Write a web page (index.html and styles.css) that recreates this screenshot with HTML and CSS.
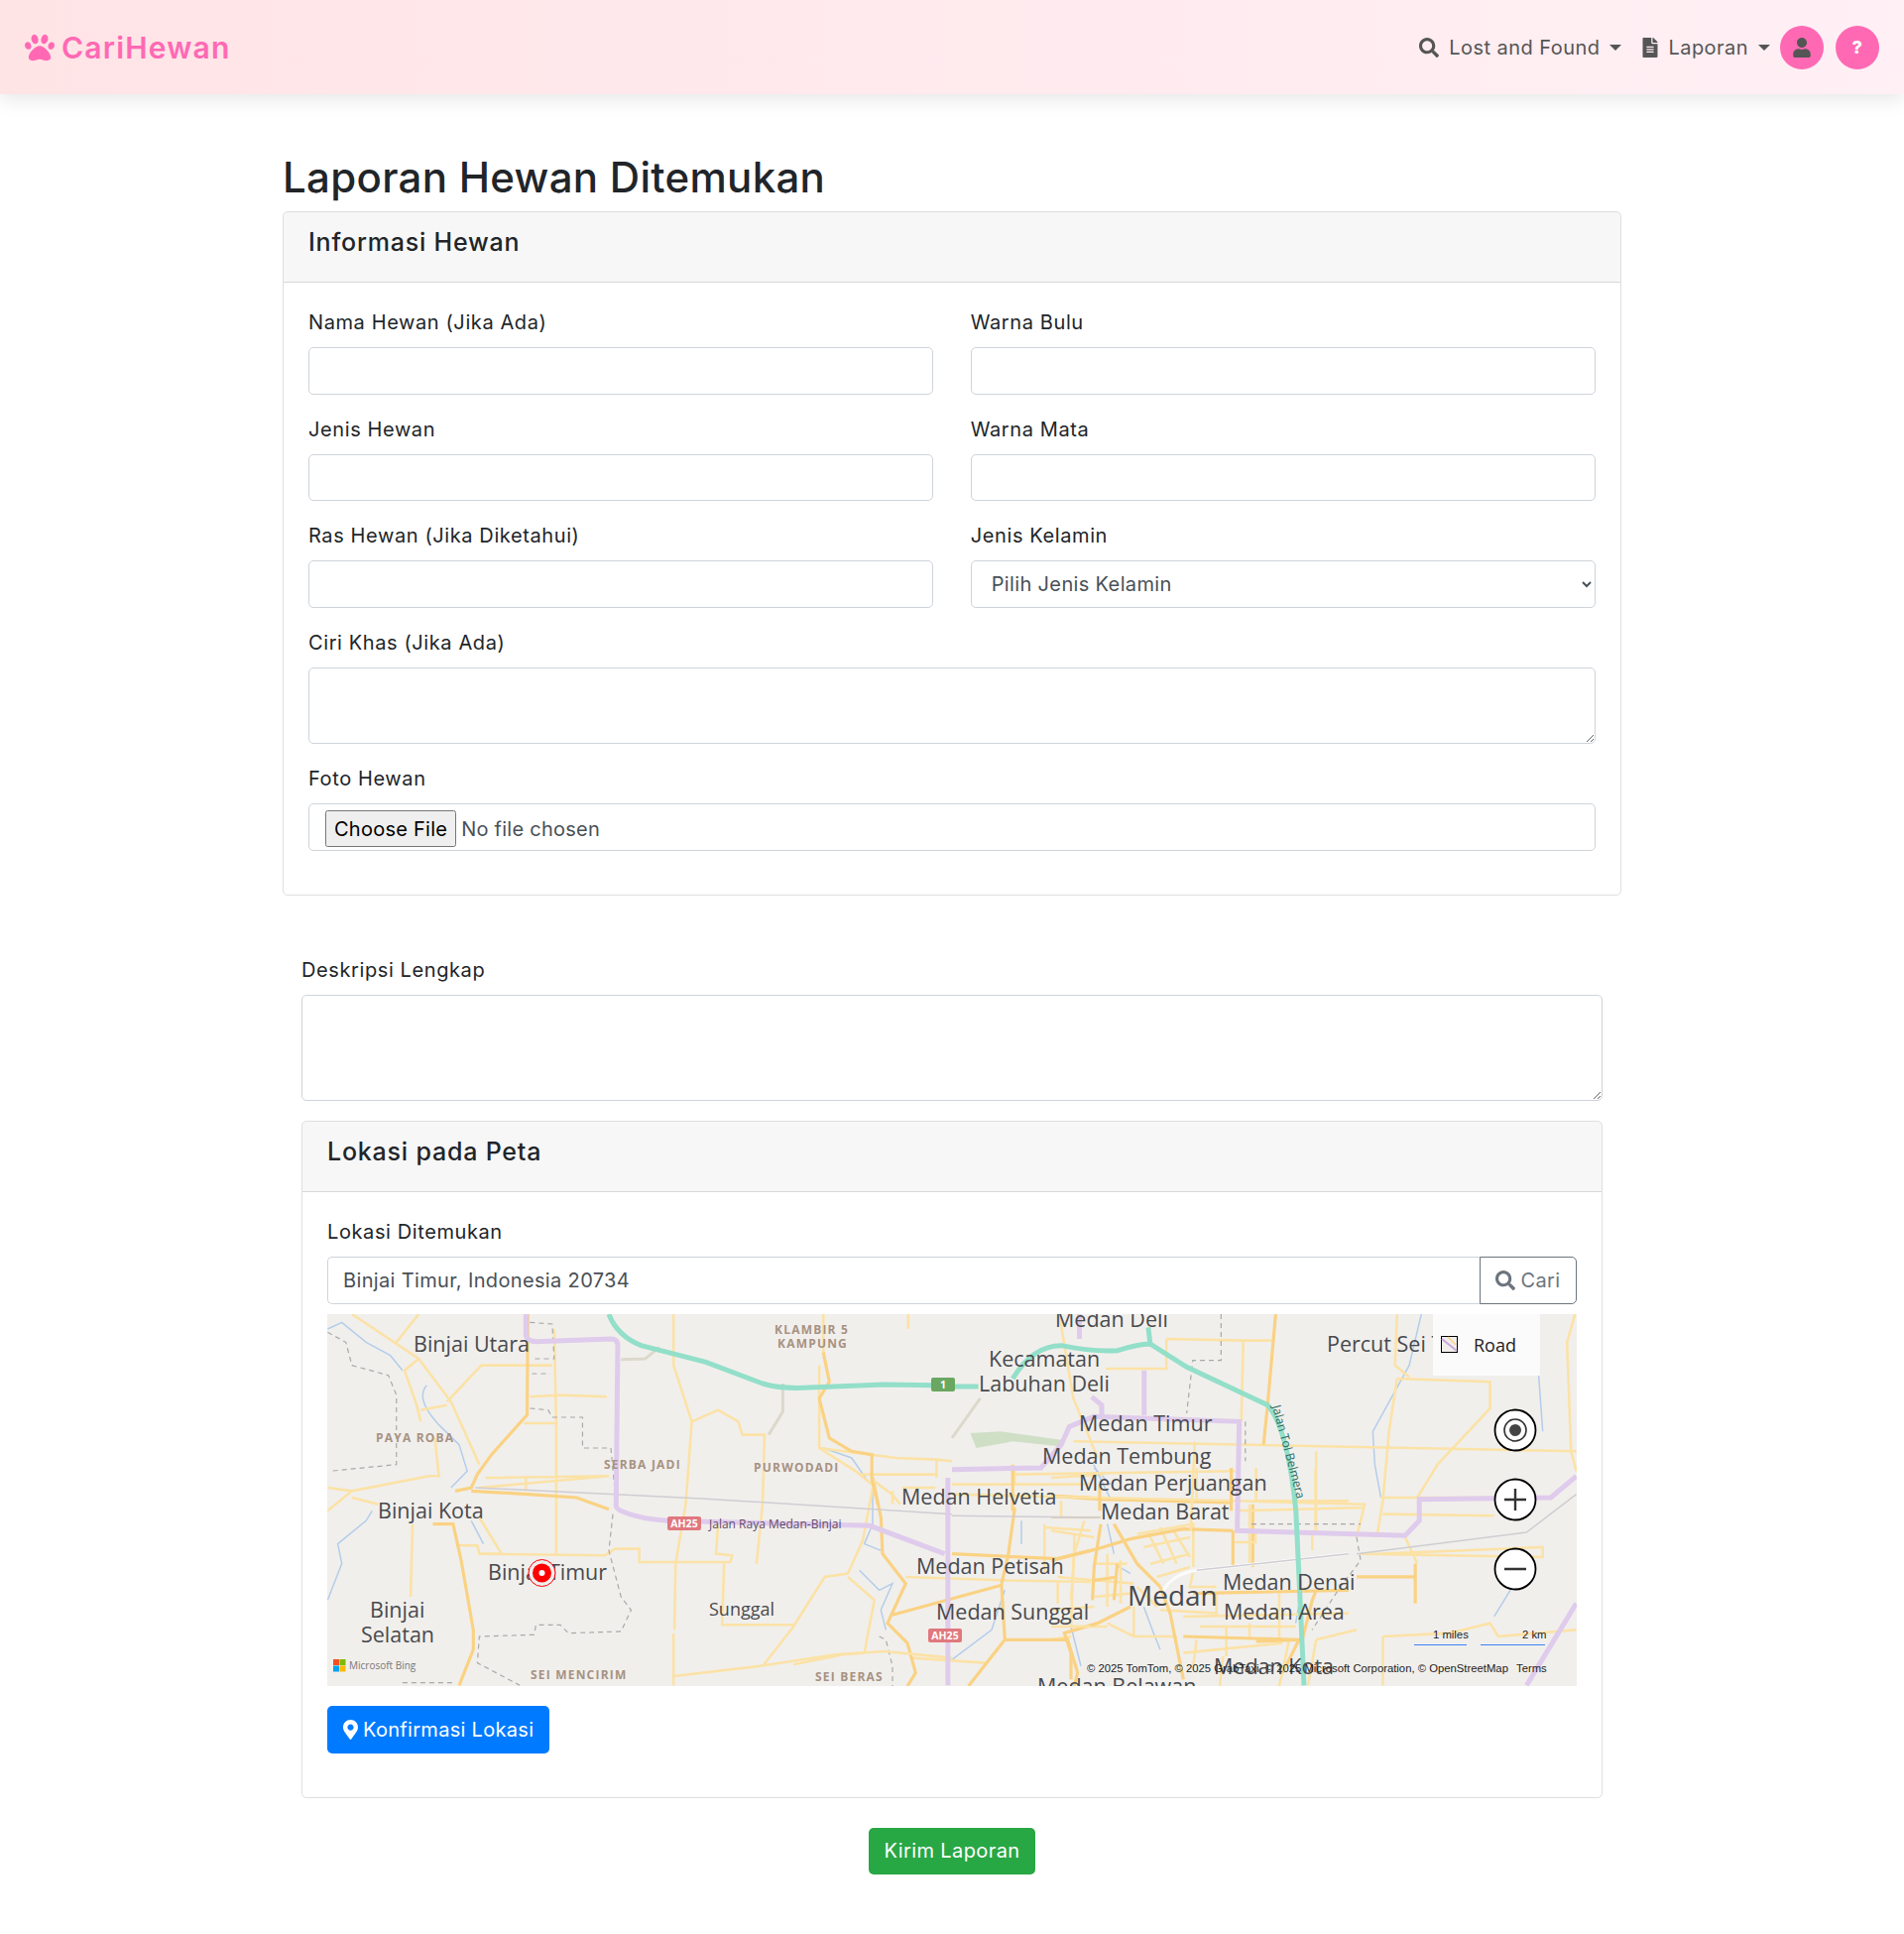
FILE: index.html
```html
<!DOCTYPE html>
<html lang="id">
<head>
    <meta charset="UTF-8">
    <meta name="viewport" content="width=device-width, initial-scale=1.0">
    <title>Laporan Hewan Ditemukan</title>
    <link rel="stylesheet" href="styles.css">
</head>
<body>
<nav class="navbar">
    <a class="brand" href="#">
        <svg class="brand-icon" viewBox="0 0 512 512"><path d="M256 224c-79.41 0-192 122.76-192 200.25 0 34.9 26.81 55.75 71.74 55.75 48.84 0 81.09-25.08 120.26-25.08 39.51 0 71.85 25.08 120.26 25.08 44.93 0 71.74-20.85 71.74-55.75C448 346.76 335.41 224 256 224zm-147.28-12.61c-10.4-34.65-42.44-57.09-71.56-50.13-29.12 6.96-44.29 40.69-33.89 75.34 10.4 34.65 42.44 57.09 71.56 50.13 29.12-6.96 44.29-40.69 33.89-75.34zm84.72-20.78c30.94-8.14 46.42-49.94 34.58-93.36s-46.52-72.01-77.46-63.87-46.42 49.94-34.58 93.36c11.84 43.42 46.52 72.02 77.46 63.87zm281.39-29.34c-29.12-6.96-61.15 15.48-71.56 50.13-10.4 34.65 4.77 68.38 33.89 75.34 29.12 6.96 61.15-15.48 71.56-50.13 10.4-34.65-4.77-68.38-33.89-75.34zm-156.27 29.34c30.94 8.14 65.62-20.45 77.46-63.87 11.84-43.42-3.64-85.21-34.58-93.36s-65.62 20.45-77.46 63.87c-11.84 43.42 3.64 85.22 34.58 93.36z"/></svg>
        CariHewan
    </a>
    <div class="nav-items">
        <a class="nav-link" href="#">
            <svg class="nav-icon" viewBox="0 0 512 512"><path d="M505 442.7L405.3 343c-4.5-4.5-10.6-7-17-7H372c27.6-35.3 44-79.7 44-128C416 93.1 322.9 0 208 0S0 93.1 0 208s93.1 208 208 208c48.3 0 92.7-16.4 128-44v16.3c0 6.4 2.5 12.5 7 17l99.7 99.7c9.4 9.4 24.6 9.4 33.9 0l28.3-28.3c9.4-9.4 9.4-24.6.1-34zM208 336c-70.7 0-128-57.2-128-128 0-70.7 57.2-128 128-128 70.7 0 128 57.2 128 128 0 70.7-57.2 128-128 128z"/></svg>
            <span>Lost and Found</span>
            <i class="caret"></i>
        </a>
        <a class="nav-link" href="#">
            <svg class="nav-icon file" viewBox="0 0 384 512"><path d="M224 136V0H24C10.7 0 0 10.7 0 24v464c0 13.3 10.7 24 24 24h336c13.3 0 24-10.7 24-24V160H248c-13.2 0-24-10.8-24-24zm64 236c0 6.6-5.4 12-12 12H108c-6.6 0-12-5.4-12-12v-8c0-6.6 5.4-12 12-12h168c6.6 0 12 5.4 12 12v8zm0-64c0 6.6-5.4 12-12 12H108c-6.6 0-12-5.4-12-12v-8c0-6.6 5.4-12 12-12h168c6.6 0 12 5.4 12 12v8zm0-72v8c0 6.6-5.4 12-12 12H108c-6.6 0-12-5.4-12-12v-8c0-6.6 5.4-12 12-12h168c6.6 0 12 5.4 12 12zm96-114.1v6.1H256V0h6.1c6.4 0 12.5 2.5 17 7l97.9 98c4.5 4.5 7 10.6 7 16.9z"/></svg>
            <span>Laporan</span>
            <i class="caret"></i>
        </a>
        <a class="nav-circle" href="#">
            <svg class="user-icon" viewBox="0 0 448 512"><path d="M224 256c70.7 0 128-57.3 128-128S294.7 0 224 0 96 57.3 96 128s57.3 128 128 128zm89.6 32h-16.7c-22.2 10.2-46.9 16-72.9 16s-50.6-5.8-72.9-16h-16.7C60.2 288 0 348.2 0 422.4V464c0 26.5 21.5 48 48 48h352c26.5 0 48-21.5 48-48v-41.6c0-74.2-60.2-134.4-134.4-134.4z"/></svg>
        </a>
        <a class="nav-circle help" href="#">?</a>
    </div>
</nav>

<main class="container">
    <h1>Laporan Hewan Ditemukan</h1>

    <section class="card">
        <h2 class="card-header">Informasi Hewan</h2>
        <div class="card-body">
            <div class="form-row">
                <div class="form-group">
                    <label for="nama">Nama Hewan (Jika Ada)</label>
                    <input class="form-control" type="text" id="nama">
                </div>
                <div class="form-group">
                    <label for="bulu">Warna Bulu</label>
                    <input class="form-control" type="text" id="bulu">
                </div>
            </div>
            <div class="form-row">
                <div class="form-group">
                    <label for="jenis">Jenis Hewan</label>
                    <input class="form-control" type="text" id="jenis">
                </div>
                <div class="form-group">
                    <label for="mata">Warna Mata</label>
                    <input class="form-control" type="text" id="mata">
                </div>
            </div>
            <div class="form-row">
                <div class="form-group">
                    <label for="ras">Ras Hewan (Jika Diketahui)</label>
                    <input class="form-control" type="text" id="ras">
                </div>
                <div class="form-group">
                    <label for="kelamin">Jenis Kelamin</label>
                    <select class="form-control" id="kelamin">
                        <option>Pilih Jenis Kelamin</option>
                    </select>
                </div>
            </div>
            <div class="form-group">
                <label for="ciri">Ciri Khas (Jika Ada)</label>
                <textarea class="form-control rows-2" id="ciri"></textarea>
            </div>
            <div class="form-group">
                <label for="foto">Foto Hewan</label>
                <div class="file-box">
                    <input class="file-input" type="file" id="foto">
                </div>
            </div>
        </div>
    </section>

    <div class="detail">
        <div class="form-group">
            <label for="deskripsi">Deskripsi Lengkap</label>
            <textarea class="form-control rows-3" id="deskripsi"></textarea>
        </div>

        <section class="card">
            <h2 class="card-header">Lokasi pada Peta</h2>
            <div class="card-body">
                <div class="form-group">
                    <label for="lokasi">Lokasi Ditemukan</label>
                    <div class="input-group">
                        <input class="form-control" type="text" id="lokasi" value="Binjai Timur, Indonesia 20734">
                        <button class="btn-cari" type="button">
                            <svg class="btn-icon" viewBox="0 0 512 512"><path d="M505 442.7L405.3 343c-4.5-4.5-10.6-7-17-7H372c27.6-35.3 44-79.7 44-128C416 93.1 322.9 0 208 0S0 93.1 0 208s93.1 208 208 208c48.3 0 92.7-16.4 128-44v16.3c0 6.4 2.5 12.5 7 17l99.7 99.7c9.4 9.4 24.6 9.4 33.9 0l28.3-28.3c9.4-9.4 9.4-24.6.1-34zM208 336c-70.7 0-128-57.2-128-128 0-70.7 57.2-128 128-128 70.7 0 128 57.2 128 128 0 70.7-57.2 128-128 128z"/></svg>
                            Cari
                        </button>
                    </div>

                    <svg class="map" viewBox="0 0 1260 375">
                        <rect width="1260" height="375" fill="#f1efec"/>

                        <!-- city centre -->
                        <g transform="translate(730,155) scale(.3333)">
                            <path class="river" d="M130 0L180 50M170 170L190 260M190 290L240 320M280 420L310 500L330 550M60 480L90 600M750 410L740 470"/>
                            <path class="minor" d="M260 200L430 170L430 300M280 240L420 210M300 290L420 260M320 330L420 300M290 190L340 290M330 180L380 290M370 190L420 270M130 290H230M130 340L250 350M130 390L240 380M170 260V420M210 280V410M0 150H150M0 190L130 210M70 200V260M20 330L130 340M0 430L130 420M600 110V290M800 0V190M620 0V100M440 0V100M400 450L900 440M450 480L740 480M530 480V570M600 470V520M690 380V520M330 430L500 440V380M170 470L250 510H380M250 420V510M0 30L160 20M30 100V150M610 100H900M790 190V250M0 480H170M0 520L60 510M430 310L420 360L500 360M400 560L700 530M440 520L430 600M520 570L510 660M720 520L690 660M100 160L70 260L60 400M260 360L320 420"/>
                            <path class="major" d="M0 85L150 95L540 105M150 170L130 300L125 400M0 280L140 245L240 215L400 185L550 190M190 170L260 290L330 360M330 360L360 440L400 640M430 380L900 370M60 640V560L40 500L140 470L240 420M550 190V300M610 110V300M400 510L750 520L700 620M620 525L760 520L790 400L800 375M200 290L190 400M130 340L200 330"/>
                            <path class="rail-white" d="M340 370Q370 320 440 310L900 260"/>
                            <path class="rail" d="M440 310L900 260M0 150H150"/>
                        </g>
                        <!-- south of the toll road -->
                        <g transform="translate(470,155) scale(.3333)">
                            <path class="river" d="M240 60L240 170L215 230L265 250M200 310L260 370L300 350L265 430L280 490M480 580L600 490L640 370M690 160V230"/>
                            <path class="minor" d="M240 60L210 220L165 320L95 330L0 480M165 330L245 400L215 560L150 565L0 595M340 330L630 340L900 345M360 575L580 590M760 170V320M760 180L900 190M800 340V410M850 230L840 480H900M430 60H330M300 70V110M480 50H900M670 50V0"/>
                            <path class="major" d="M240 30L265 150L270 260L340 350L285 470L345 530L370 620L345 660M300 445L630 355L640 520L530 660M640 520H830L860 620L850 660M480 260L800 275L900 250M670 120L650 265L630 350M780 85L900 90"/>
                            <path class="boundary" d="M260 510L280 520L300 600V660"/>
                        </g>

                        <!-- west half of the map -->
                        <g transform="translate(-9.8,-15) scale(.408,.3333)">
                            <path class="river" d="M25 90L60 70L120 130L180 170L210 215M270 260Q240 300 300 380L350 440L370 520L330 570M25 910L60 800L50 740L120 670L135 640M380 670L410 740M1250 450L1320 480L1360 550"/>
                            <path class="minor" d="M85 45L250 180L330 310L400 500M250 180L215 215L245 320L255 370M250 45L195 130M320 310L405 200L580 200M255 335L320 320M525 295L600 290L715 295M510 375L590 375M585 90L590 375L590 775M415 540L720 535L400 570M515 540V580M25 570L85 580L275 535L300 535L290 420M85 580L25 640M85 600L150 620M400 770L710 775L735 755L795 755L795 795L1020 795L1025 775L985 770L990 680M345 745L395 745L400 770L455 770L400 660M880 45L880 200L925 370L910 620L885 800L882 1000M925 370L990 335L1040 370L1050 410L1105 410L1100 620L1085 800M235 680L230 900M1005 795L1000 985L1180 985M1100 1110L1180 985M880 1140L1090 1110L1280 1075L1400 1065L1568 1085M880 1010V1168M1240 200L1240 450L1330 520L1370 560M1240 450L1430 480L1530 485L1568 490M1340 530L1530 530M1370 545L1420 590L1440 620M1460 45V90M1530 490V540M1250 45V160"/>
                            <path class="major" d="M520 45L518 350L430 470L395 530L380 570L340 580M380 580L520 590L640 600L720 635M285 680L335 680L355 790L385 1000L385 1060L350 1168M1250 160L1265 250L1240 300L1265 420L1320 460L1370 470L1370 545L1385 620"/>
                            <path class="tan" d="M750 182L810 180L845 145M1150 255L1150 340L1115 410"/>
                            <path class="rail" d="M390 570L950 603L1568 650"/>
                            <path class="boundary" d="M25 100L70 130L85 200L175 230L195 290L195 500L30 520M525 70L580 75L585 180L530 180M530 225L575 225M525 330L570 335L580 357L655 357L655 450L725 450L735 580M730 650L720 760L750 900L775 940L750 1005L620 1010L600 985L540 985L535 1015L400 1020L395 1100L500 1168M210 1160L340 1160"/>
                            <path class="purple" d="M515 45L515 110Q520 128 540 128L725 120Q742 120 742 140L738 620Q735 635 760 645Q800 665 865 670L1365 685L1550 770M1558 540V1168"/>
                            <path class="teal" d="M720 45Q740 110 800 140L960 190L1100 255Q1140 270 1200 268L1400 258L1520 260"/>
                        </g>

                        <!-- east half of the map -->
                        <g transform="translate(630,-15) scale(.408,.3333)">
                            <path class="park-fill" d="M45 405L120 400L270 425L265 445L150 430L60 450Z"/>
                            <path class="river" d="M1160 45L1130 200L1040 400L1045 500L1060 600M1420 800L1340 960M1450 230L1460 400M350 500L390 600"/>
                            <path class="minor" d="M265 45L300 300L360 480M530 120L720 125L790 125M530 120L530 210L380 210M720 125L715 370M300 430L1543 460M150 530L700 520M0 590L700 610L1020 620L1000 720M900 460V700M600 430L590 700M700 640L1020 630M1540 45L1520 130L1530 460L1543 520M1100 240L1330 250L1330 330L1200 500L1150 600M1100 240L1080 400L1065 610L1050 720M1060 600H1340M1065 650L1340 655M1120 720L1150 800M1060 770L1460 750L1460 780L1010 770M1065 1020L1230 1010L1330 980L1350 1020L1543 1000M1065 1020V1168M1100 45L1095 200L1130 235M700 735H750V700M900 1030L880 1168M1000 1000L900 1030"/>
                            <path class="major" d="M150 500V640M365 560V640M690 510V640M1145 800V920M1000 840H1145M800 45L780 320L770 440"/>
                            <path class="tan" d="M0 420L70 300"/>
                            <path class="rail" d="M0 655L360 660M1000 770L1420 705L1543 590"/>
                            <path class="boundary" d="M665 45V185H595L580 345M725 370V490M740 680H1010M1000 720L1010 790L960 870L890 1000"/>
                            <path class="purple" d="M0 515L220 510L270 440L290 385L350 355L710 370L705 700L1120 715L1155 670L1155 605L1480 600L1543 535M315 45V120M475 215V350M345 295L370 320V355M1420 1168L1543 920"/>
                            <path class="teal" d="M0 264L65 264M150 240Q200 140 270 140Q350 160 410 155Q460 135 490 135M485 85L490 135L580 205L780 320Q830 390 850 640L860 900L870 1168"/>
                        </g>

                        <g class="map-label">
                            <text x="87" y="38">Binjai Utara</text>
                            <text x="51" y="206">Binjai Kota</text>
                            <text x="162" y="268">Binjai Timur</text>
                            <text x="43" y="306">Binjai</text>
                            <text x="34" y="331">Selatan</text>
                            <text x="385" y="304" class="small">Sunggal</text>
                            <text x="734" y="13">Medan Deli</text>
                            <text x="667" y="53">Kecamatan</text>
                            <text x="657" y="78">Labuhan Deli</text>
                            <text x="1008" y="38">Percut Sei Tuan</text>
                            <text x="758" y="118">Medan Timur</text>
                            <text x="721" y="151">Medan Tembung</text>
                            <text x="758" y="178">Medan Perjuangan</text>
                            <text x="780" y="207">Medan Barat</text>
                            <text x="579" y="192">Medan Helvetia</text>
                            <text x="594" y="262">Medan Petisah</text>
                            <text x="614" y="308">Medan Sunggal</text>
                            <text x="807" y="294" class="city">Medan</text>
                            <text x="903" y="278">Medan Denai</text>
                            <text x="904" y="308">Medan Area</text>
                            <text x="894" y="363">Medan Kota</text>
                            <text x="716" y="383">Medan Belawan</text>
                        </g>
                        <g class="map-area">
                            <text x="49" y="129">PAYA ROBA</text>
                            <text x="279" y="156">SERBA JADI</text>
                            <text x="430" y="159">PURWODADI</text>
                            <text x="451" y="20">KLAMBIR 5</text>
                            <text x="454" y="34">KAMPUNG</text>
                            <text x="205" y="368">SEI MENCIRIM</text>
                            <text x="492" y="370">SEI BERAS</text>
                        </g>

                        <rect x="343" y="204" width="34" height="14" rx="2" fill="#e0787e"/>
                        <text class="shield" x="360" y="215">AH25</text>
                        <rect x="606" y="317" width="34" height="14" rx="2" fill="#e0787e"/>
                        <text class="shield" x="623" y="328">AH25</text>
                        <rect x="609" y="64" width="24" height="14" rx="2" fill="#6aa760"/>
                        <text class="shield" x="621" y="75">1</text>
                        <text class="road-name" x="385" y="216">Jalan Raya Medan-Binjai</text>
                        <text class="toll-name" transform="translate(953,93) rotate(75)">Jalan Tol Belmera</text>

                        <!-- pushpin -->
                        <circle cx="216.5" cy="261" r="13.5" fill="#eee" stroke="#f00"/>
                        <circle cx="216.5" cy="261" r="9.5" fill="#f00"/>
                        <circle cx="216.5" cy="261" r="3" fill="#fff"/>

                        <!-- map type -->
                        <rect x="1115" y="0" width="108" height="62" fill="#fbfbfb"/>
                        <rect x="1123.5" y="22.5" width="16" height="16" fill="#f1efec" stroke="#000"/>
                        <path d="M1124 25L1139 37" stroke="#c9a8dc" stroke-width="2"/>
                        <path d="M1130 23L1138 31" stroke="#fbd27c" stroke-width="1.5"/>
                        <text class="map-type" x="1156" y="38">Road</text>

                        <!-- controls -->
                        <g class="map-btn">
                            <circle cx="1198" cy="117" r="20.5"/>
                            <circle cx="1198" cy="187" r="20.5"/>
                            <circle cx="1198" cy="257" r="20.5"/>
                        </g>
                        <circle cx="1198" cy="117" r="11" fill="none" stroke="#333" stroke-width="1.6"/>
                        <circle cx="1198" cy="117" r="6" fill="#444"/>
                        <path d="M1198 176V198M1187 187H1209M1187 257H1209" stroke="#333" stroke-width="2.4"/>

                        <!-- scale and copyright -->
                        <g class="map-small">
                            <text x="1115" y="327">1 miles</text>
                            <text x="1205" y="327">2 km</text>
                            <text x="766" y="361">© 2025 TomTom, © 2025 GrabTaxi, © 2025 Microsoft Corporation, © OpenStreetMap</text>
                            <text x="1199" y="361">Terms</text>
                        </g>
                        <path d="M1096 333.5H1149M1163 333.5H1228" stroke="#3b82f6"/>

                        <!-- bing logo -->
                        <rect x="6" y="348" width="6" height="6" fill="#f25022"/>
                        <rect x="12.500" y="348" width="6" height="6" fill="#7fba00"/>
                        <rect x="6" y="354.500" width="6" height="6" fill="#00a4ef"/>
                        <rect x="12.500" y="354.500" width="6" height="6" fill="#ffb900"/>
                        <text class="bing" x="22" y="358">Microsoft Bing</text>
                    </svg>

                    <button class="btn btn-blue" type="button">
                        <svg class="pin-icon" viewBox="0 0 384 512"><path d="M172.268 501.67C26.97 291.031 0 273.413 0 192 0 85.961 85.961 0 192 0s192 85.961 192 192c0 81.413-26.97 99.031-172.268 309.67-9.535 13.774-29.93 13.773-39.464 0zM192 272c44.183 0 80-35.817 80-80s-35.817-80-80-80-80 35.817-80 80 35.817 80 80 80z"/></svg>
                        Konfirmasi Lokasi
                    </button>
                </div>
            </div>
        </section>
    </div>

    <div class="submit-row">
        <button class="btn btn-green" type="submit">Kirim Laporan</button>
    </div>
</main>
</body>
</html>
```

FILE: styles.css
```css
* { box-sizing: border-box; }

body {
    margin: 0;
    font-family: Inter, "Noto Sans", sans-serif;
    font-size: 20px;
    line-height: 30px;
    color: #212529;
    background: #fff;
    letter-spacing: .4px;
}

/* Navbar */
.navbar {
    height: 95px;
    padding: 0 25px;
    display: flex;
    align-items: center;
    justify-content: space-between;
    background: linear-gradient(90deg, #ffe4e6, #fff0f5);
    box-shadow: 0 5px 19px rgba(0, 0, 0, .1);
}
.brand {
    display: flex;
    align-items: center;
    gap: 7px;
    font-size: 30px;
    font-weight: 600;
    letter-spacing: 1.2px;
    color: #ff69b4;
    text-decoration: none;
}
.brand-icon { width: 30px; height: 30px; fill: #ff69b4; }
.nav-items { display: flex; align-items: center; }
.nav-link {
    display: flex;
    align-items: center;
    gap: 10px;
    color: #555;
    text-decoration: none;
    margin-right: 21px;
    letter-spacing: .45px;
}
.nav-link + .nav-link { margin-right: 10px; }
.nav-icon { width: 20px; height: 20px; fill: #555; }
.nav-icon.file { width: 16px; }
.caret {
    border-top: 6px solid #555;
    border-left: 6px solid transparent;
    border-right: 6px solid transparent;
}
.nav-circle {
    width: 44px;
    height: 44px;
    border-radius: 50%;
    background: #ff69b4;
    display: flex;
    align-items: center;
    justify-content: center;
    text-decoration: none;
}
.help { margin-left: 12px; color: #fff; font-weight: 800; font-size: 18px; }
.user-icon { width: 18px; height: 20px; fill: #555; }

/* Page */
.container {
    width: 1350px;
    margin: 60px auto 0;
    padding-bottom: 60px;
}
h1 {
    margin: 0 0 10px;
    font-size: 42px;
    line-height: 48px;
    font-weight: 500;
    letter-spacing: .3px;
}
.card {
    border: 1px solid rgba(0, 0, 0, .125);
    border-radius: 5px;
    overflow: hidden;
}
.card-header {
    margin: 0;
    height: 71px;
    padding: 15px 25px;
    font-size: 25px;
    line-height: 30px;
    font-weight: 500;
    letter-spacing: .8px;
    background: rgba(0, 0, 0, .03);
    border-bottom: 1px solid rgba(0, 0, 0, .125);
}
.card-body { padding: 25px 25px 24px; }

/* Forms */
.form-row { display: flex; gap: 37.5px; }
.form-row .form-group { flex: 1; }
.form-group { margin-bottom: 20px; }
label { display: block; margin-bottom: 10px; letter-spacing: .6px; }
.form-control {
    display: block;
    width: 100%;
    height: 47.5px;
    padding: 7.5px 15px;
    font: inherit;
    letter-spacing: .35px;
    color: #495057;
    background: #fff;
    border: 1.25px solid #ced4da;
    border-radius: 5px;
}
select.form-control { padding-left: 16px; }
textarea.rows-2 { height: 77.5px; }
textarea.rows-3 { height: 107.5px; }
.file-box {
    height: 47.5px;
    padding: 6px 16px;
    border: 1.25px solid #ced4da;
    border-radius: 5px;
}
.file-input { font: inherit; letter-spacing: .25px; color: #495057; width: 100%; }
.file-input::file-selector-button { font: inherit; letter-spacing: inherit; color: #000; height: 37px; margin-right: 5px; padding: 0 7px; }

.detail { margin: 60px 19px 0; }
.input-group { display: flex; margin-bottom: 10.5px; }
.input-group .form-control { flex: 1; border-radius: 5px 0 0 5px; border-right: 0; }
.btn-cari {
    width: 98px;
    display: flex;
    align-items: center;
    justify-content: center;
    gap: 5px;
    font: inherit;
    letter-spacing: inherit;
    color: #6c757d;
    background: #fff;
    border: 1.25px solid #6c757d;
    border-radius: 0 5px 5px 0;
}
.btn-icon { width: 20px; height: 20px; fill: #6c757d; }

.btn {
    height: 47.5px;
    padding: 0 16px;
    font: inherit;
    letter-spacing: inherit;
    color: #fff;
    border: 0;
    border-radius: 5px;
}
.btn-blue {
    display: flex;
    align-items: center;
    gap: 5px;
    margin-top: 20px;
    background: #007bff;
    letter-spacing: .3px;
}
.btn-green { background: #28a745; }
.pin-icon { width: 15px; height: 20px; fill: #fff; }
.submit-row { margin-top: 30px; text-align: center; }

/* Map */
.map { display: block; width: 100%; height: 375px; }
.map path { vector-effect: non-scaling-stroke; fill: none; }
.map .park-fill { fill: #cfdfc6; stroke: none; }
.map .minor { stroke: #fbe2a6; stroke-width: 2.6; }
.map .major { stroke: #fad283; stroke-width: 3.2; }
.map .tan { stroke: #dcd9cc; stroke-width: 3; }
.map .river { stroke: #b4cdea; stroke-width: 1.5; }
.map .rail { stroke: #cfcdd2; stroke-width: 1.5; }
.map .rail-white { stroke: #fbfbfb; stroke-width: 3; }
.map .boundary { stroke: #a9a9a9; stroke-width: 1.2; stroke-dasharray: 5 4; }
.map .purple { stroke: #dfcbec; stroke-width: 5; }
.map .teal { stroke: #93dfc9; stroke-width: 5; }
.map text { letter-spacing: 0; }
.map-label text {
    font-family: "Open Sans", sans-serif;
    font-size: 21.5px;
    fill: #484a4e;
}
.map-label .small { font-size: 18px; }
.map-label .city { font-size: 28px; }
.map-area text {
    font-family: "Open Sans", sans-serif;
    font-size: 12px;
    font-weight: 700;
    letter-spacing: 1.2px;
    fill: #a79283;
}
.map .shield {
    font-family: "Open Sans", sans-serif;
    font-size: 10.5px;
    font-weight: 700;
    fill: #fff;
    text-anchor: middle;
}
.road-name { font-family: "Open Sans", sans-serif; font-size: 12px; fill: #5e4b6b; }
.toll-name { font-family: "Open Sans", sans-serif; font-size: 12px; fill: #2d6a60; }
.map-type { font-family: "Open Sans", sans-serif; font-size: 18px; fill: #222; }
.map-btn circle { fill: #fff; stroke: #000; stroke-width: 1.8; }
.map-small text { font-family: "Liberation Sans", sans-serif; font-size: 11.3px; fill: #222; }
.bing { font-family: "Open Sans", sans-serif; font-size: 10px; fill: #777; }
```
